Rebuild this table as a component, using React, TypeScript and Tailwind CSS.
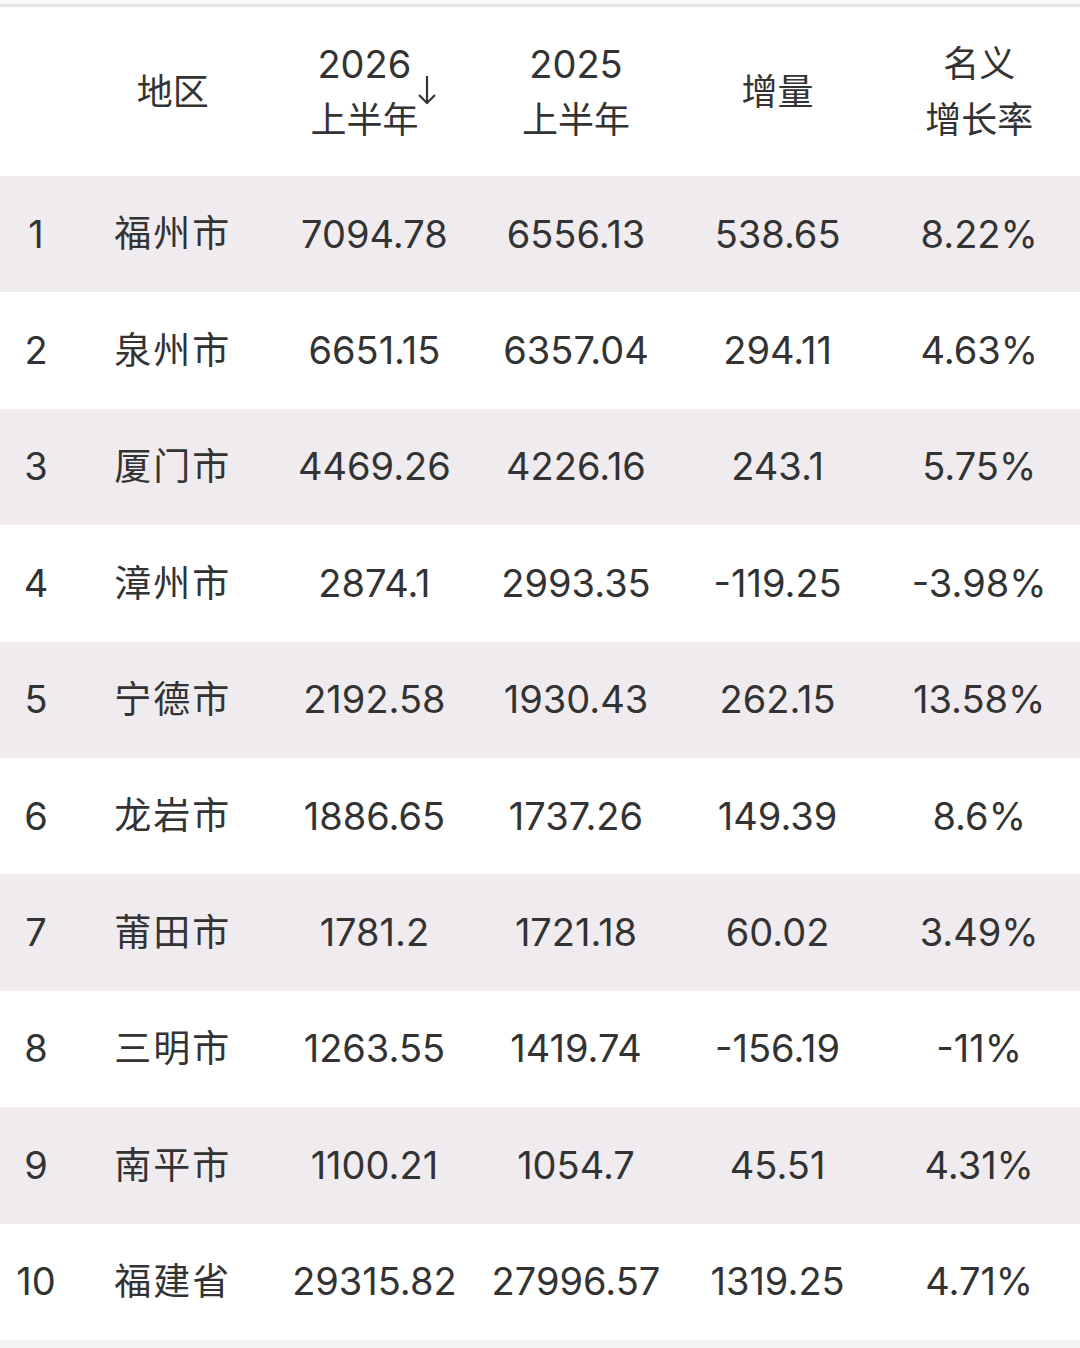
const rows = [
  ["1", "福州市", "7094.78", "6556.13", "538.65", "8.22%"],
  ["2", "泉州市", "6651.15", "6357.04", "294.11", "4.63%"],
  ["3", "厦门市", "4469.26", "4226.16", "243.1", "5.75%"],
  ["4", "漳州市", "2874.1", "2993.35", "-119.25", "-3.98%"],
  ["5", "宁德市", "2192.58", "1930.43", "262.15", "13.58%"],
  ["6", "龙岩市", "1886.65", "1737.26", "149.39", "8.6%"],
  ["7", "莆田市", "1781.2", "1721.18", "60.02", "3.49%"],
  ["8", "三明市", "1263.55", "1419.74", "-156.19", "-11%"],
  ["9", "南平市", "1100.21", "1054.7", "45.51", "4.31%"],
  ["10", "福建省", "29315.82", "27996.57", "1319.25", "4.71%"],
];

const font = "font-['Inter','Noto_Sans_CJK_SC',sans-serif]";

function SortArrow() {
  return (
    <svg width="22" height="32" viewBox="0 0 22 32" className="-mt-[4px] -ml-[2px] shrink-0">
      <path d="M11 2 V29 M3 21 L11 29 L19 21" fill="none" stroke="#333" strokeWidth="2.2" />
    </svg>
  );
}

export default function App() {
  return (
    <div className={`min-h-screen bg-[#f4f4f4] text-[#333] ${font}`}>
      <div className="h-[4px] bg-[#f8f8f8]" />
      <div className="h-[3px] bg-[#e4e4e4]" />
      <div className="bg-white">
        <div className="grid h-[169px] grid-cols-[72px_repeat(5,1fr)] items-center text-center text-[36px] leading-[56px]">
          <div />
          <div>地区</div>
          <div className="flex items-center justify-center">
            <div className="flex flex-col items-center">
              <span className="text-[38px]">2026</span>
              <span>上半年</span>
            </div>
            <SortArrow />
          </div>
          <div className="flex flex-col items-center">
            <span className="text-[38px]">2025</span>
            <span>上半年</span>
          </div>
          <div>增量</div>
          <div className="flex flex-col items-center">
            <span>名义</span>
            <span>增长率</span>
          </div>
        </div>
        {rows.map((r, i) => (
          <div
            key={r[0]}
            className={`grid h-[116.4px] grid-cols-[72px_repeat(5,1fr)] items-center text-center text-[38px] ${
              i % 2 === 0 ? "bg-[#efebef]" : "bg-white"
            }`}
          >
            <div>{r[0]}</div>
            <div className="text-[37px] tracking-[2px]">{r[1]}</div>
            <div>{r[2]}</div>
            <div>{r[3]}</div>
            <div>{r[4]}</div>
            <div>{r[5]}</div>
          </div>
        ))}
      </div>
    </div>
  );
}
